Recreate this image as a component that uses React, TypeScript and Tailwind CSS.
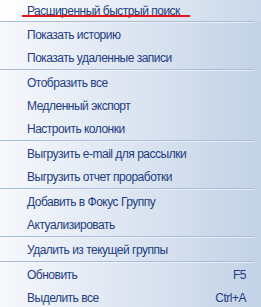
const groups: { label: string; shortcut?: string }[][] = [
  [{ label: 'Показать историю' }, { label: 'Показать удаленные записи' }],
  [
    { label: 'Отобразить все' },
    { label: 'Медленный экспорт' },
    { label: 'Настроить колонки' },
  ],
  [
    { label: 'Выгрузить e-mail для рассылки' },
    { label: 'Выгрузить отчет проработки' },
  ],
  [{ label: 'Добавить в Фокус Группу' }, { label: 'Актуализировать' }],
  [{ label: 'Удалить из текущей группы' }],
  [
    { label: 'Обновить', shortcut: 'F5' },
    { label: 'Выделить все', shortcut: 'Ctrl+A' },
  ],
];

function Separator() {
  return (
    <div className="pr-[7px]">
      <div className="h-px bg-[#a9bdd8]" />
      <div className="h-px bg-[#f3f6fb]/70" />
    </div>
  );
}

export default function App() {
  return (
    <div
      className="h-[307px] w-[261px] overflow-hidden bg-gradient-to-r from-[#f6f8fc] to-[#c3d2e6] text-[12px] tracking-[-0.5px] text-[#1d3d82]"
      style={{ fontFamily: '"Liberation Sans", Arial, sans-serif' }}
    >
      <div className="relative flex h-[21px] items-center bg-gradient-to-r from-white to-[#cad8ea] pl-[27px]">
        <span className="leading-none">Расширенный быстрый поиск</span>
        <div className="absolute top-[15px] left-[22px] h-[2px] w-[168px] bg-[#e8141c]" />
      </div>
      {groups.map((group, gi) => (
        <div key={gi}>
          <Separator />
          {group.map((item) => (
            <div
              key={item.label}
              className="flex h-[23px] items-center justify-between pr-[15px] pl-[27px]"
            >
              <span>{item.label}</span>
              {item.shortcut && <span>{item.shortcut}</span>}
            </div>
          ))}
        </div>
      ))}
    </div>
  );
}
